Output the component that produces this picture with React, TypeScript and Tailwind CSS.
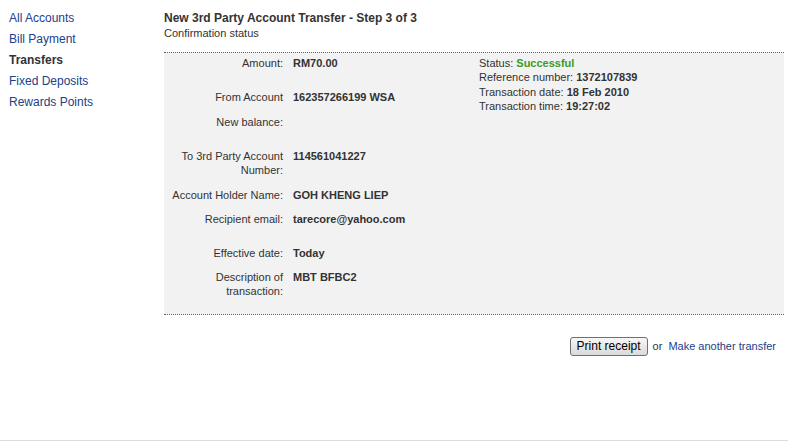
import React from "react";

const font = { fontFamily: '"Liberation Sans", Arial, sans-serif' };

type Row = { label: React.ReactNode; value: string; mb: string };

const rows: Row[] = [
  { label: "Amount:", value: "RM70.00", mb: "mb-[20px]" },
  { label: "From Account", value: "162357266199 WSA", mb: "mb-[11px]" },
  { label: "New balance:", value: "", mb: "mb-[20px]" },
  {
    label: (
      <>
        To 3rd Party Account
        <br />
        Number:
      </>
    ),
    value: "114561041227",
    mb: "mb-[11px]",
  },
  { label: "Account Holder Name:", value: "GOH KHENG LIEP", mb: "mb-[10px]" },
  { label: "Recipient email:", value: "tarecore@yahoo.com", mb: "mb-[20px]" },
  { label: "Effective date:", value: "Today", mb: "mb-[10px]" },
  {
    label: (
      <>
        Description of
        <br />
        transaction:
      </>
    ),
    value: "MBT BFBC2",
    mb: "mb-0",
  },
];

export default function App() {
  return (
    <div style={font} className="w-[788px] h-[443px] bg-white text-[#333]">
      <div className="flex h-[441px] border-b border-[#dcdcdc]">
        {/* sidebar */}
        <div className="w-[164px] shrink-0 pl-[9px] pt-[8px] text-[12px] leading-[21px]">
          <div className="text-[#22408a]">All Accounts</div>
          <div className="text-[#22408a]">Bill Payment</div>
          <div className="font-bold text-[#333]">Transfers</div>
          <div className="text-[#22408a]">Fixed Deposits</div>
          <div className="text-[#22408a]">Rewards Points</div>
        </div>

        {/* main */}
        <div className="w-[620px] pt-[11px]">
          <div className="text-[12px] leading-[15px] font-bold text-[#333]">
            New 3rd Party Account Transfer - Step 3 of 3
          </div>
          <div className="text-[11px] leading-[14px] text-[#333]">Confirmation status</div>

          <div className="mt-[12px] bg-[#f2f2f2] border-y border-dotted border-[#666] pt-[3px] pb-[16px] flex">
            <div className="w-[315px] shrink-0">
              {rows.map((r, i) => (
                <div key={i} className={`flex text-[11px] leading-[14px] ${r.mb}`}>
                  <div className="w-[119px] shrink-0 text-right text-[#333]">{r.label}</div>
                  <div className="pl-[10px] font-bold text-[#333]">{r.value}</div>
                </div>
              ))}
            </div>
            <div className="text-[11px] leading-[14.4px]">
              <div>
                Status: <span className="font-bold text-[#3a9a2a]">Successful</span>
              </div>
              <div>
                Reference number: <span className="font-bold">1372107839</span>
              </div>
              <div>
                Transaction date: <span className="font-bold">18 Feb 2010</span>
              </div>
              <div>
                Transaction time: <span className="font-bold">19:27:02</span>
              </div>
            </div>
          </div>

          <div className="mt-[22px] flex items-center justify-end pr-[8px] text-[11px]">
            <button className="h-[19px] w-[78px] px-0 text-[12px] leading-[17px] text-black border border-[#707070] rounded-[3px] bg-gradient-to-b from-[#f7f7f7] to-[#dadada]">
              Print receipt
            </button>
            <span className="ml-[5px] text-[#333]">or</span>
            <span className="ml-[6px] text-[#22408a]">Make another transfer</span>
          </div>
        </div>
      </div>
    </div>
  );
}
